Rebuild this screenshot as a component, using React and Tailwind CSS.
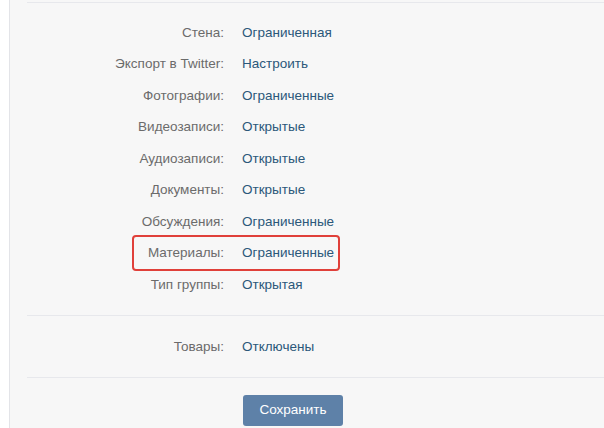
import React from 'react';

const rows = [
  ['Стена:', 'Ограниченная'],
  ['Экспорт в Twitter:', 'Настроить'],
  ['Фотографии:', 'Ограниченные'],
  ['Видеозаписи:', 'Открытые'],
  ['Аудиозаписи:', 'Открытые'],
  ['Документы:', 'Открытые'],
  ['Обсуждения:', 'Ограниченные'],
  ['Материалы:', 'Ограниченные', true],
  ['Тип группы:', 'Открытая'],
];

const Row = ({ label, value, marked }) => (
  <div className="relative flex items-center h-[31.5px]">
    <div className="w-[197px] text-right text-[#6b6b6b]">{label}</div>
    <div className="ml-[18px] text-[#2b587a]">{value}</div>
    {marked && (
      <div className="absolute left-[105px] top-[-2.25px] w-[208px] h-[36px] border-2 border-[#e0403a] rounded-[4px]" />
    )}
  </div>
);

export default function App() {
  return (
    <div
      className="w-[604px] h-[428px] bg-white flex overflow-hidden text-[13.5px]"
      style={{ fontFamily: '"Liberation Sans", Arial, sans-serif' }}
    >
      <div className="w-[9px]" />
      <div className="flex-1 bg-[#f7f7f7] border-l border-[#e3e4e8] pl-[17px]">
        <div className="mt-[2px] h-px bg-[#e7e8ec]" />
        <div className="pt-[14px] pb-[14px]">
          {rows.map(([l, v, m]) => (
            <Row key={l} label={l} value={v} marked={m} />
          ))}
        </div>
        <div className="h-px bg-[#e7e8ec]" />
        <div className="pt-[16px] pb-[14px]">
          <Row label="Товары:" value="Отключены" />
        </div>
        <div className="h-px bg-[#e7e8ec]" />
        <div className="pl-[216px] pt-[17px]">
          <button className="w-[100px] h-[31px] rounded-[3px] bg-[#5e81a8] text-white text-[13.5px]">
            Сохранить
          </button>
        </div>
      </div>
    </div>
  );
}
